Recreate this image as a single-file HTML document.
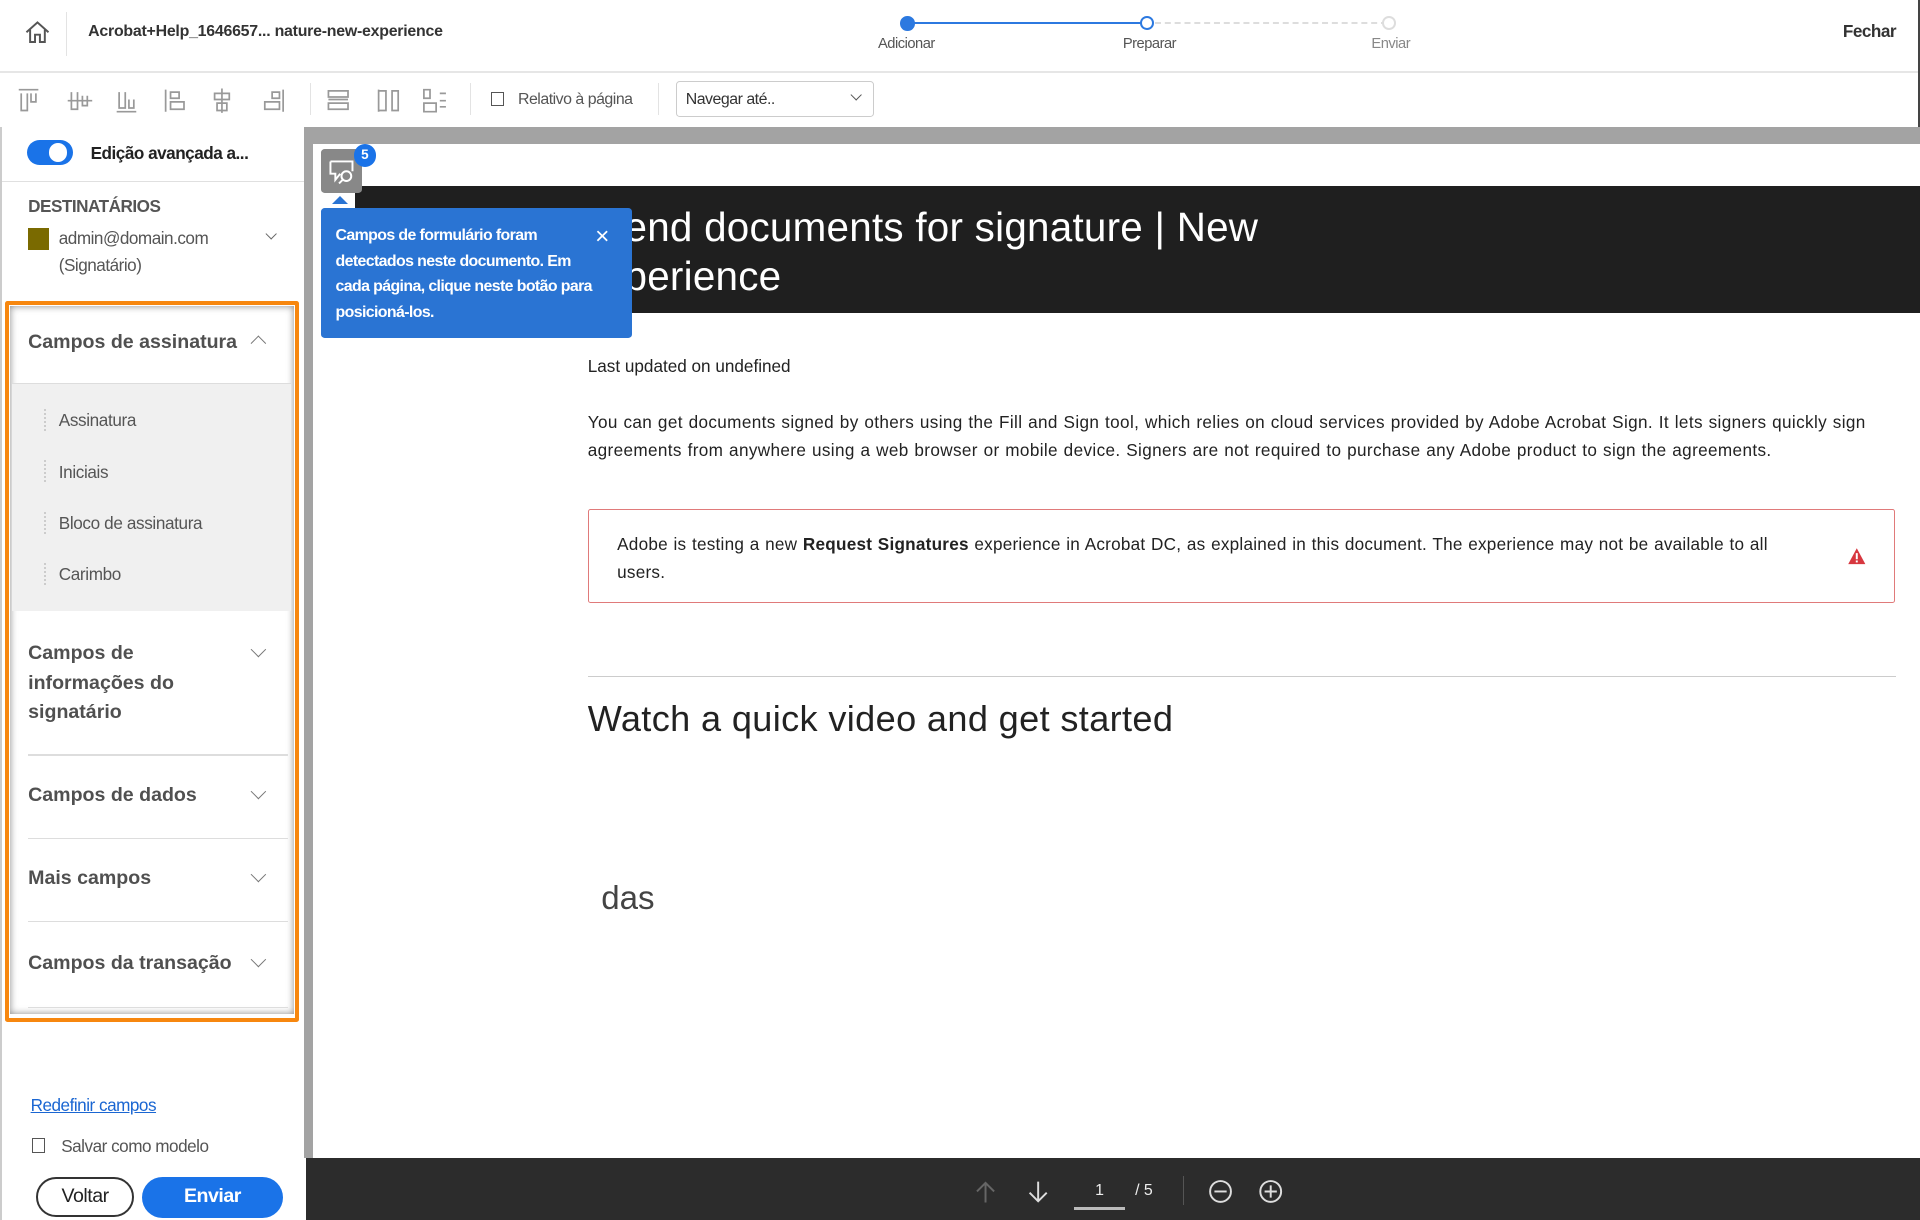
<!DOCTYPE html>
<html><head><meta charset="utf-8"><style>
html,body{margin:0;padding:0;width:1920px;height:1219px;overflow:hidden;background:#fff}
#r{position:absolute;left:0;top:0;width:1568px;height:996px;zoom:1.22449;font-family:"Liberation Sans",sans-serif;color:#333;overflow:hidden}
.a{position:absolute}
.n{font-family:"Liberation Sans Narrow","Liberation Sans",sans-serif;letter-spacing:-0.4px}
.sec{position:absolute;left:23px;font-size:16px;font-weight:bold;color:#505050;line-height:24px}
.chev{position:absolute;left:207px;width:8px;height:8px;border-right:1.6px solid #777;border-bottom:1.6px solid #777;transform:rotate(45deg)}
.hr{position:absolute;left:23px;width:212px;height:1px;background:#ddd}
.sub{position:absolute;left:48px;font-size:14px;color:#555;letter-spacing:-0.3px}
.dot{position:absolute;left:36px;width:0;height:18px;border-left:2px dotted #ccc}
</style></head><body><div id="r">
<div class="a" style="left:0;top:0;width:1566px;height:58px;border-bottom:2px solid #e6e6e6;background:#fff"></div>
<div class="a" style="left:1566px;top:0;width:2px;height:104px;background:#444"></div>
<svg class="a" style="left:20px;top:16px" width="22" height="20" viewBox="0 0 22 20"><path d="M2 10L11 2L20 10M5 8V18H9V12H13V18H17V8" fill="none" stroke="#555" stroke-width="1.6"/></svg>
<div class="a" style="left:54px;top:10px;width:1px;height:36px;background:#e3e3e3"></div>
<div class="a n" style="left:72px;top:19px;font-size:13px;color:#333;font-weight:bold;letter-spacing:-0.2px">Acrobat+Help_1646657... nature-new-experience</div>
<div class="a" style="left:741px;top:18px;width:196px;height:2px;background:#2c79e0"></div>
<div class="a" style="left:943px;top:18px;width:190px;height:0;border-top:2px dashed #ddd"></div>
<div class="a" style="left:735px;top:13px;width:12px;height:12px;border-radius:50%;background:#2c79e0"></div>
<div class="a" style="left:931px;top:13px;width:8px;height:8px;border-radius:50%;border:2px solid #2c79e0;background:#fff"></div>
<div class="a" style="left:1129px;top:13px;width:8px;height:8px;border-radius:50%;border:2px solid #ddd;background:#fff"></div>
<div class="a n" style="left:717px;top:29px;font-size:12px;color:#555">Adicionar</div>
<div class="a n" style="left:917px;top:29px;font-size:12px;color:#555">Preparar</div>
<div class="a n" style="left:1120px;top:29px;font-size:12px;color:#888">Enviar</div>
<div class="a n" style="left:1505px;top:17px;font-size:14px;font-weight:bold;color:#333">Fechar</div>
<svg class="a" style="left:12px;top:70px" width="360" height="24" viewBox="0 0 360 24" fill="none" stroke="#999" stroke-width="1.4">
<path d="M3 3H19M5 6V20H10V6M13 6V13H17V6"/>
<path d="M43 12H63M46 5V19H51V5M55 8V16H59V8"/>
<path d="M83 21H99M85 5V18H90V5M93 11V18H97V11"/>
<path d="M123 3V21M127 5H134V10H127ZM127 13H138V19H127Z"/>
<path d="M169 2V22M163 6H175V11H163ZM165 14H173V20H165Z"/>
<path d="M219 3V21M210 5H216V10H210ZM204 13H216V19H204Z"/>
<path d="M256 4H272V9H256ZM256 14H272V19H256ZM256 11H272"/>
<path d="M297 3V21M297 4H303V20H297ZM308 4H313V20H308Z"/>
<path d="M334 3H339V10H334ZM334 14H344V21H334ZM347 6H352M347 12H352M347 17H352"/>
</svg>
<div class="a" style="left:253px;top:68px;width:1px;height:26px;background:#e3e3e3"></div>
<div class="a" style="left:384px;top:68px;width:1px;height:26px;background:#e3e3e3"></div>
<div class="a" style="left:537px;top:68px;width:1px;height:26px;background:#e3e3e3"></div>
<div class="a" style="left:401px;top:75px;width:9px;height:10px;border:1.5px solid #555"></div>
<div class="a n" style="left:423px;top:74px;font-size:13px;color:#555">Relativo à página</div>
<div class="a" style="left:552px;top:66px;width:160px;height:28px;border:1px solid #ccc;border-radius:3px"></div>
<div class="a n" style="left:560px;top:74px;font-size:13px;color:#333">Navegar até..</div>
<div class="chev" style="left:696px;top:74px;width:6px;height:6px;border-color:#555"></div>
<div class="a" style="left:250px;top:104px;width:1318px;height:14px;background:#a3a3a3"></div>
<div class="a" style="left:248px;top:104px;width:8px;height:842px;background:#a3a3a3"></div>
<div class="a" style="left:0;top:104px;width:2px;height:892px;background:#ccc"></div>
<div class="a" style="left:22px;top:114px;width:38px;height:21px;border-radius:11px;background:#1a73e8"></div>
<div class="a" style="left:40px;top:117px;width:15px;height:15px;border-radius:50%;background:#fff"></div>
<div class="a n" style="left:74px;top:117px;font-size:14px;font-weight:bold;color:#222">Edição avançada a...</div>
<div class="a" style="left:2px;top:148px;width:246px;height:1px;background:#e0e0e0"></div>
<div class="a n" style="left:23px;top:160px;font-size:14px;font-weight:bold;color:#555">DESTINATÁRIOS</div>
<div class="a" style="left:23px;top:186px;width:17px;height:18px;background:#7a6a00"></div>
<div class="a n" style="left:48px;top:186px;font-size:14px;color:#555">admin@domain.com</div>
<div class="a n" style="left:48px;top:208px;font-size:14px;color:#555">(Signatário)</div>
<div class="chev" style="left:218px;top:188px;width:6px;height:6px;border-color:#666"></div>
<div class="a" style="left:8px;top:250px;width:232px;height:578px;background:#fff;box-shadow:0 0 6px #888 inset"></div>
<div class="a" style="left:10px;top:313px;width:228px;height:186px;background:#f0f0f0"></div>
<div class="a" style="left:10px;top:313px;width:228px;height:1px;background:#ddd"></div>
<div class="sec" style="top:268px">Campos de assinatura</div>
<div class="chev" style="top:276px;transform:rotate(-135deg)"></div>
<div class="dot" style="top:334px"></div><div class="sub" style="top:335px">Assinatura</div>
<div class="dot" style="top:376px"></div><div class="sub" style="top:377px">Iniciais</div>
<div class="dot" style="top:418px"></div><div class="sub" style="top:419px">Bloco de assinatura</div>
<div class="dot" style="top:460px"></div><div class="sub" style="top:461px">Carimbo</div>
<div class="sec" style="top:522px">Campos de<br>informações do<br>signatário</div>
<div class="chev" style="top:526px"></div>
<div class="hr" style="top:616px"></div>
<div class="sec" style="top:638px">Campos de dados</div>
<div class="chev" style="top:642px"></div>
<div class="hr" style="top:684px"></div>
<div class="sec" style="top:706px">Mais campos</div>
<div class="chev" style="top:710px"></div>
<div class="hr" style="top:752px"></div>
<div class="sec" style="top:775px">Campos da transação</div>
<div class="chev" style="top:779px"></div>
<div class="hr" style="top:822px"></div>
<div class="a" style="left:4px;top:246px;width:234px;height:582px;border:4px solid #f7870f;border-radius:2px"></div>
<div class="a n" style="left:25px;top:894px;font-size:14px;color:#1a66d2;text-decoration:underline">Redefinir campos</div>
<div class="a" style="left:26px;top:929px;width:9px;height:11px;border:1.5px solid #555"></div>
<div class="a n" style="left:50px;top:928px;font-size:14px;color:#555">Salvar como modelo</div>
<div class="a" style="left:29px;top:961px;width:77px;height:30px;border:2px solid #333;border-radius:17px;background:#fff"></div>
<div class="a n" style="left:29px;top:968px;width:81px;text-align:center;font-size:16px;color:#222">Voltar</div>
<div class="a" style="left:116px;top:961px;width:115px;height:34px;border-radius:17px;background:#1a73e8"></div>
<div class="a n" style="left:116px;top:968px;width:115px;text-align:center;font-size:16px;color:#fff;font-weight:bold">Enviar</div>
<div class="a" style="left:290px;top:152px;width:1278px;height:104px;background:#1f1f1f"></div>
<div class="a" style="left:510px;top:166px;font-size:33px;color:#fff;line-height:40px;letter-spacing:0.2px">end documents for signature | New<br>perience</div>
<div class="a" style="left:262px;top:122px;width:34px;height:36px;border-radius:3px;background:#888"></div>
<svg class="a" style="left:268px;top:130px" width="24" height="22" viewBox="0 0 24 22" fill="none" stroke="#fff" stroke-width="1.6"><path d="M2 2H20V10M2 2V12H6V17L10 12"/><circle cx="15" cy="14" r="4"/><path d="M12 17L9 20"/></svg>
<div class="a" style="left:289px;top:118px;width:18px;height:18px;border-radius:50%;background:#1a73e8;color:#fff;font-size:11px;font-weight:bold;text-align:center;line-height:18px">5</div>
<div class="a" style="left:271px;top:160px;width:0;height:0;border:7px solid transparent;border-bottom-color:#2a74d3;border-top:0"></div>
<div class="a n" style="left:262px;top:170px;width:230px;height:82px;padding:12px;background:#2a74d3;border-radius:3px;color:#fff;font-size:13px;font-weight:bold;line-height:21px;letter-spacing:-0.5px">Campos de formulário foram<br>detectados neste documento. Em<br>cada página, clique neste botão para<br>posicioná-los.</div>
<div class="a" style="left:486px;top:182px;color:#fff;font-size:20px">×</div>
<div class="a" style="left:480px;top:291px;font-size:14px;color:#222">Last updated on undefined</div>
<div class="a" style="left:480px;top:333px;font-size:14px;color:#222;line-height:23px;width:1050px;letter-spacing:0.3px;word-spacing:0.5px">You can get documents signed by others using the Fill and Sign tool, which relies on cloud services provided by Adobe Acrobat Sign. It lets signers quickly sign agreements from anywhere using a web browser or mobile device. Signers are not required to purchase any Adobe product to sign the agreements.</div>
<div class="a" style="left:480px;top:416px;width:1066px;height:75px;border:1.5px solid #e07a7a;border-radius:2px"></div>
<div class="a" style="left:504px;top:433px;font-size:14px;color:#222;line-height:23px;width:970px;letter-spacing:0.2px;word-spacing:0.5px">Adobe is testing a new <b>Request Signatures</b> experience in Acrobat DC, as explained in this document. The experience may not be available to all users.</div>
<svg class="a" style="left:1508px;top:447px" width="16" height="15" viewBox="0 0 16 15"><path d="M8 1L15 14H1Z" fill="#d7373f"/><rect x="7.2" y="5" width="1.6" height="5" fill="#fff"/><rect x="7.2" y="11" width="1.6" height="1.6" fill="#fff"/></svg>
<div class="a" style="left:480px;top:552px;width:1068px;height:1px;background:#ccc"></div>
<div class="a" style="left:480px;top:570px;font-size:29.5px;color:#222;letter-spacing:0.3px">Watch a quick video and get started</div>
<div class="a" style="left:491px;top:719px;font-size:27px;color:#444">das</div>
<div class="a" style="left:250px;top:946px;width:1318px;height:50px;background:#2c2c2c"></div>
<svg class="a" style="left:794px;top:962px" width="260" height="24" viewBox="0 0 260 24" fill="none" stroke-width="1.6">
<path d="M11 20V4M4 11L11 4L18 11" stroke="#666"/>
<path d="M54 3V19M47 12L54 19L61 12" stroke="#ddd"/>
<circle cx="203" cy="11" r="8.5" stroke="#ddd"/><path d="M198 11H208" stroke="#ddd"/>
<circle cx="244" cy="11" r="8.5" stroke="#ddd"/><path d="M239 11H249M244 6V16" stroke="#ddd"/>
</svg>
<div class="a" style="left:877px;top:965px;width:42px;text-align:center;color:#eee;font-size:13px">1</div>
<div class="a" style="left:877px;top:986px;width:42px;height:2px;background:#bbb"></div>
<div class="a" style="left:927px;top:965px;color:#eee;font-size:13px">/ 5</div>
<div class="a" style="left:966px;top:960px;width:1px;height:24px;background:#555"></div>
</div></body></html>
